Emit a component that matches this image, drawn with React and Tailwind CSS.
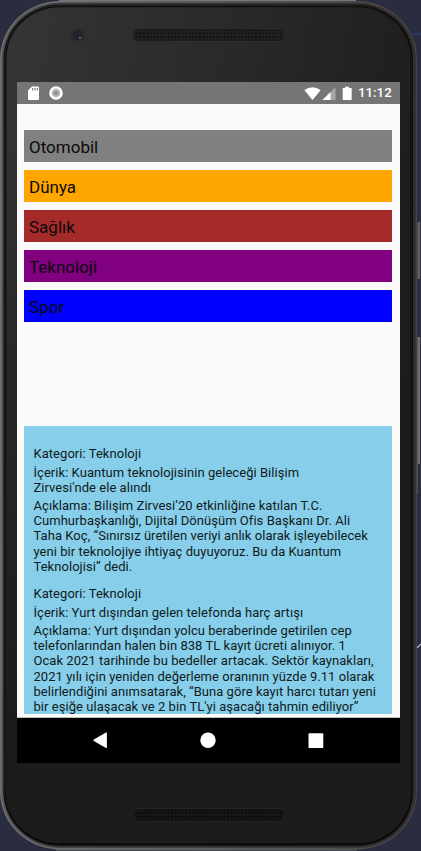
import React from "react";

const categories = [
  { name: "Otomobil", color: "bg-[#808080]" },
  { name: "Dünya", color: "bg-[#ffa500]" },
  { name: "Sağlık", color: "bg-[#a52a2a]" },
  { name: "Teknoloji", color: "bg-[#800080]" },
  { name: "Spor", color: "bg-[#0000ff]" },
];

const news = [
  [
    ["Kategori: Teknoloji"],
    ["İçerik: Kuantum teknolojisinin geleceği Bilişim", "Zirvesi'nde ele alındı"],
    [
      "Açıklama: Bilişim Zirvesi’20 etkinliğine katılan T.C.",
      "Cumhurbaşkanlığı, Dijital Dönüşüm Ofis Başkanı Dr. Ali",
      "Taha Koç, “Sınırsız üretilen veriyi anlık olarak işleyebilecek",
      "yeni bir teknolojiye ihtiyaç duyuyoruz. Bu da Kuantum",
      "Teknolojisi” dedi.",
    ],
  ],
  [
    ["Kategori: Teknoloji"],
    ["İçerik: Yurt dışından gelen telefonda harç artışı"],
    [
      "Açıklama: Yurt dışından yolcu beraberinde getirilen cep",
      "telefonlarından halen bin 838 TL kayıt ücreti alınıyor. 1",
      "Ocak 2021 tarihinde bu bedeller artacak. Sektör kaynakları,",
      "2021 yılı için yeniden değerleme oranının yüzde 9.11 olarak",
      "belirlendiğini anımsatarak, “Buna göre kayıt harcı tutarı yeni",
      "bir eşiğe ulaşacak ve 2 bin TL'yi aşacağı tahmin ediliyor”",
    ],
  ],
];

function Speaker({ id, rim, base, dot }) {
  return (
    <svg width="154" height="14" viewBox="0 0 154 14" className="block">
      <defs>
        <pattern id={id} width="3.5" height="3.6" patternUnits="userSpaceOnUse">
          <circle cx="1.5" cy="1.8" r="0.85" fill={dot} />
        </pattern>
      </defs>
      <rect x="0.5" y="0.5" width="153" height="13" rx="6.5" fill={base} stroke={rim} strokeWidth="0.7" />
      <rect x="3" y="1.5" width="148" height="11" rx="5" fill={`url(#${id})`} />
    </svg>
  );
}

function StatusBar() {
  return (
    <div className="flex h-[22px] shrink-0 items-center justify-between bg-[#757575] pr-[9px] pl-[10px] text-white">
      <div className="flex items-center gap-[9px]">
        <svg width="13" height="15" viewBox="0 0 13 15">
          <path d="M5 0.500h5.800q1.200 0 1.200 1.200v11.100q0 1.200-1.200 1.200H2.200Q1 14 1 12.800V4.500z" fill="#fff" />
          <path d="M5.600 2v2.600M8 2v2.600M10.300 2v2.600" stroke="#757575" strokeWidth="1.1" />
        </svg>
        <svg width="14" height="14" viewBox="0 0 14 14">
          <circle cx="7" cy="7" r="5.600" fill="#bdbdbd" stroke="#fff" strokeWidth="2.400" />
          <circle cx="7" cy="7" r="2.600" fill="#999" />
        </svg>
      </div>
      <div className="flex items-center">
        <svg width="49" height="15" viewBox="0 0 49 15">
          <path d="M0.300 4Q8.500-1.600 16.700 4L8.500 14z" fill="#fff" />
          <path d="M31.500 1v13H18.500z" fill="#a6a6a6" />
          <path d="M26.500 6v8H18.500z" fill="#fff" />
          <path d="M39 2h2V0.700h4V2h2q0.700 0 0.700 0.700v10.600q0 0.700-0.700 0.700h-7.600q-0.700 0-0.700-0.700V2.700z" fill="#fff" />
        </svg>
        <span className="ml-[5px] w-[33px] text-[13.3px] leading-[22px] font-medium whitespace-nowrap">11:12</span>
      </div>
    </div>
  );
}

function NavigationBar() {
  return (
    <div className="h-[45px] shrink-0 bg-black">
      <svg width="383" height="45" viewBox="0 0 383 45" fill="#fff">
        <path d="M76.800 21.500q-.8.900 0 1.600L89 30q.9.400.9-.5V15q0-.9-.9-.5z" />
        <circle cx="191" cy="22.300" r="7.700" />
        <rect x="291.500" y="15.200" width="14.800" height="14.800" rx="0.800" />
      </svg>
    </div>
  );
}

export default function App() {
  return (
    <div className="relative h-[851px] w-[421px] overflow-hidden bg-[#2a2d40] font-['Roboto','Noto_Sans',sans-serif]">
      <svg className="absolute top-0 left-0" width="421" height="851" viewBox="0 0 421 851">
        <defs>
          <linearGradient id="body" x1="0" y1="0" x2="1" y2="0.4">
            <stop offset="0" stopColor="#353535" />
            <stop offset="0.5" stopColor="#292929" />
            <stop offset="1" stopColor="#1c1c1c" />
          </linearGradient>
          <linearGradient id="shade" x1="0" y1="0" x2="0" y2="1">
            <stop offset="0.15" stopColor="#1c1c1c" stopOpacity="0" />
            <stop offset="0.85" stopColor="#1c1c1c" />
          </linearGradient>
          <linearGradient id="rim" x1="0" y1="0" x2="1" y2="0">
            <stop offset="0" stopColor="#717171" />
            <stop offset="0.5" stopColor="#5c5c5c" />
            <stop offset="1" stopColor="#474342" />
          </linearGradient>
          <linearGradient id="edge" x1="0" y1="0" x2="1" y2="0">
            <stop offset="0" stopColor="#585858" />
            <stop offset="0.15" stopColor="#363636" />
            <stop offset="1" stopColor="#302e2e" />
          </linearGradient>
        </defs>
        <path d="M412 34h9" stroke="#263b61" strokeWidth="2" />
        <path d="M59 0.500h297M56 849.800h301" stroke="#777" />
        <path d="M418.700 222v57" stroke="#65625f" strokeWidth="2.600" />
        <path d="M418.700 337v127" stroke="#73706e" strokeWidth="2.600" />
        <path d="M417.500 464v30" stroke="#55504f" />
        <path d="M417 648l4-4" stroke="#bab5d1" strokeWidth="1.200" />
        <rect x="0" y="1" width="417" height="848.500" rx="60" ry="58" fill="url(#rim)" />
        <rect x="1.300" y="2.800" width="414.500" height="845" rx="58.500" ry="56.500" fill="url(#edge)" />
        <rect x="3.400" y="4.800" width="409.600" height="841" rx="56" ry="54" fill="#0c0c0c" />
        <rect x="4.500" y="5.600" width="407" height="838" rx="55" ry="53" fill="#292929" />
        <rect x="5.300" y="6.200" width="406" height="837.500" rx="54" ry="52" fill="#0b0b0b" />
        <rect x="6.500" y="7.300" width="404" height="835.700" rx="53" ry="51" fill="url(#body)" />
        <rect x="6.500" y="7.300" width="404" height="835.700" rx="53" ry="51" fill="url(#shade)" />
        <circle cx="77" cy="35.500" r="8" fill="#2d2d2d" />
        <circle cx="77.500" cy="35.500" r="5" fill="#22202a" />
        <circle cx="80" cy="38" r="1.200" fill="#725064" />
      </svg>

      <div className="relative flex h-full flex-col pr-[21px] pl-[17px]">
        <div className="flex h-[82px] shrink-0 justify-start pt-[28px] pl-[115px]">
          <Speaker id="top-speaker" base="#202020" rim="#303030" dot="#080808" />
        </div>

        <main className="flex h-[681px] w-[383px] shrink-0 flex-col overflow-hidden bg-[#fafafa] text-black">
          <StatusBar />
          <div className="flex flex-1 flex-col overflow-hidden pt-[26px] pr-[8px] pl-[7px]">
            <div className="flex h-[296px] shrink-0 flex-col gap-2">
              {categories.map(({ name, color }) => (
                <button
                  key={name}
                  className={`flex h-8 shrink-0 items-center pt-[2px] pl-[5px] text-left text-[17px] leading-5 text-[#0a0a0a] ${color}`}
                >
                  {name}
                </button>
              ))}
            </div>
            <div className="flex h-[288px] shrink-0 flex-col gap-[12.2px] overflow-hidden bg-[#87ceeb] pt-[20.3px] pl-[9.5px]">
              {news.map((item, index) => (
                <article key={index} className="flex shrink-0 flex-col gap-[3px] text-[13px] leading-[15.24px] tracking-[0.045px] text-[#101b20]">
                  {item.map((lines) => (
                    <p key={lines[0]}>
                      {lines.map((line) => (
                        <span key={line} className="block whitespace-nowrap">{line}</span>
                      ))}
                    </p>
                  ))}
                </article>
              ))}
            </div>
          </div>
          <div className="h-px shrink-0 bg-[#bdbdbd]" />
          <NavigationBar />
        </main>

        <div className="flex flex-1 justify-start pt-[45px] pl-[115px]">
          <Speaker id="bottom-speaker" base="#161616" rim="#292929" dot="#030303" />
        </div>
      </div>
    </div>
  );
}
